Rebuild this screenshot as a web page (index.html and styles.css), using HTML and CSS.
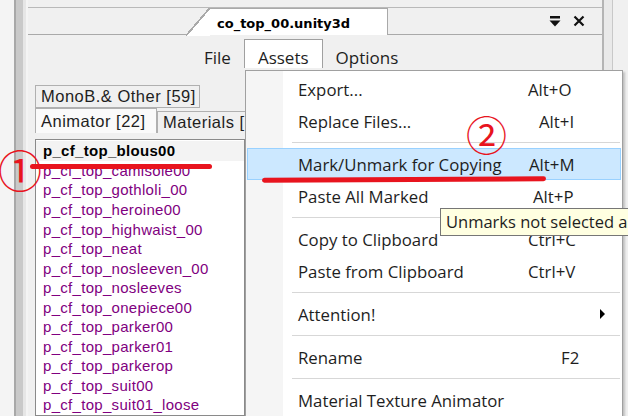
FILE: index.html
```html
<!DOCTYPE html>
<html lang="en">
<head>
  <meta charset="UTF-8">
  <title>co_top_00.unity3d</title>
  <link rel="stylesheet" href="styles.css">
</head>
<body>
  <div class="app">
    <div class="rail"><div class="rail-bar"></div></div>
    <div class="main">
      <div class="topstrip"></div>
      <div class="doc-tabs">
        <div class="doc-tab">co_top_00.unity3d</div>
        <div class="doc-ctrl">
          <svg width="12" height="11" viewBox="0 0 12 11"><rect x="1" y="0" width="10" height="2.5" fill="#111"/><path d="M0.5 4.5h11l-5.5 6z" fill="#111"/></svg>
          <svg width="12" height="12" viewBox="0 0 12 12"><path d="M1.5 1.5l9 9M10.5 1.5l-9 9" stroke="#111" stroke-width="2.2"/></svg>
        </div>
      </div>
      <div class="menubar">
        <span class="mb-item">File</span>
        <span class="mb-item open">Assets</span>
        <span class="mb-item">Options</span>
      </div>
      <div class="pane">
        <div class="tabrow back"><span class="tab">MonoB.&amp; Other [59]</span></div>
        <div class="tabrow front">
          <span class="tab sel">Animator [22]</span>
          <span class="tab">Materials [</span>
        </div>
        <ul class="asset-list">
          <li class="current">p_cf_top_blous00</li>
          <li>p_cf_top_camisole00</li>
          <li>p_cf_top_gothloli_00</li>
          <li>p_cf_top_heroine00</li>
          <li>p_cf_top_highwaist_00</li>
          <li>p_cf_top_neat</li>
          <li>p_cf_top_nosleeven_00</li>
          <li>p_cf_top_nosleeves</li>
          <li>p_cf_top_onepiece00</li>
          <li>p_cf_top_parker00</li>
          <li>p_cf_top_parker01</li>
          <li>p_cf_top_parkerop</li>
          <li>p_cf_top_suit00</li>
          <li>p_cf_top_suit01_loose</li>
        </ul>
      </div>
    </div>
    <div class="right-rail"></div>
  </div>

  <div class="ctx">
    <div class="ctx-item"><span>Export...</span><span class="key">Alt+O</span></div>
    <div class="ctx-item"><span>Replace Files...</span><span class="key k2">Alt+I</span></div>
    <div class="ctx-sep"></div>
    <div class="ctx-item hot"><span>Mark/Unmark for Copying</span><span class="key">Alt+M</span></div>
    <div class="ctx-item"><span>Paste All Marked</span><span class="key k1">Alt+P</span></div>
    <div class="ctx-sep"></div>
    <div class="ctx-item"><span>Copy to Clipboard</span><span class="key">Ctrl+C</span></div>
    <div class="ctx-item"><span>Paste from Clipboard</span><span class="key">Ctrl+V</span></div>
    <div class="ctx-sep"></div>
    <div class="ctx-item"><span>Attention!</span><span class="arrow"></span></div>
    <div class="ctx-sep"></div>
    <div class="ctx-item"><span>Rename</span><span class="key k3">F2</span></div>
    <div class="ctx-sep"></div>
    <div class="ctx-item"><span>Material Texture Animator</span></div>
  </div>

  <div class="tip">Unmarks not selected a</div>

  <span class="mark m1">①</span>
  <span class="mark m2">②</span>
  <div class="stroke s1"></div>
  <div class="stroke s2"></div>
</body>
</html>
```

FILE: styles.css
```css
html, body {
  margin: 0;
  height: 100%;
  overflow: hidden;
}
body {
  background-color: #f0f0f0;
  font-family: "Open Sans", "Noto Sans", sans-serif;
  color: #1e1e1e;
  position: relative;
}
.app {
  display: flex;
  height: 416px;
}
.rail {
  width: 28px;
  display: flex;
  justify-content: flex-end;
  background-color: #f4f4f4;
}
.rail-bar {
  width: 12px;
  margin-right: 2px;
  background: linear-gradient(to right, #a8a8a8 0, #a8a8a8 2px, #c9c9c9 2px, #c9c9c9 9px, #e6e6e6 9px);
}
.main {
  width: 574px;
  display: flex;
  flex-direction: column;
}
.right-rail {
  width: 8px;
  border-left: 2px solid #b4b4b4;
  border-right: 1px solid #c8c8c8;
  background-color: #e9e9e9;
}
.topstrip {
  height: 7px;
  border-bottom: 1px solid #b9b9b9;
}

/* document tab */
.doc-tabs {
  height: 26px;
  display: flex;
  align-items: stretch;
  border-bottom: 1px solid #a9a9a9;
}
.doc-tab {
  margin-left: 180px;
  width: 170px;
  padding-left: 9px;
  padding-top: 4px;
  background-color: #fff;
  border: 1px solid #a9a9a9;
  border-bottom: none;
  border-left: none;
  margin-bottom: -1px;
  position: relative;
  font-family: "DejaVu Sans", sans-serif;
  font-weight: bold;
  font-size: 13px;
  line-height: 22px;
  color: #000;
}
.doc-tab::before {
  content: "";
  position: absolute;
  left: -22px;
  top: -1px;
  width: 24px;
  height: 28px;
  background: linear-gradient(to bottom right, transparent 47%, #a9a9a9 47%, #a9a9a9 52%, #fff 52%);
}
.doc-ctrl {
  margin-left: auto;
  margin-right: 17px;
  display: flex;
  align-items: center;
  gap: 12px;
  padding-top: 1px;
}

/* menu bar */
.menubar {
  height: 35px;
  display: flex;
  align-items: flex-end;
  padding-left: 163px;
  font-size: 17px;
}
.mb-item {
  padding: 0 13px;
  line-height: 18px;
}
.mb-item.open {
  box-sizing: border-box;
  height: 29px;
  background-color: #fff;
  border: 1px solid #a0a0a0;
  border-bottom: none;
  padding-top: 9px;
  margin-bottom: -1px;
  position: relative;
  z-index: 3;
}

/* left pane */
.pane {
  padding-left: 7px;
  padding-top: 18px;
  flex: 1;
  display: flex;
  flex-direction: column;
  font-family: "Liberation Sans", sans-serif;
  font-size: 15px;
}
.tabrow {
  display: flex;
}
.tab {
  border: 1px solid #b0b0b0;
  border-bottom: none;
  padding: 0 8px 0 5px;
  line-height: 21px;
  font-size: 16.5px;
  letter-spacing: 0.5px;
  background-color: #f0f0f0;
  white-space: nowrap;
}
.tabrow.back .tab {
  width: 150px;
  border-bottom: 1px solid #b0b0b0;
}
.tabrow.front .tab {
  margin-top: 3px;
}
.tabrow.front .tab.sel {
  margin-top: 0;
  width: 107px;
  line-height: 24px;
  background-color: #fafafa;
}
.asset-list {
  list-style: none;
  margin: 6px 0 0 0;
  padding: 1px 0 0 0;
  width: 208px;
  flex: 1;
  background-color: #fff;
  border: 1px solid #8a8a8a;
  color: #800080;
}
.asset-list li {
  line-height: 19.55px;
  padding-left: 7px;
  letter-spacing: 0.3px;
  white-space: nowrap;
}
.asset-list li.current {
  color: #000;
  font-weight: bold;
  background-color: #f3f3f3;
}

/* context menu */
.ctx {
  position: absolute;
  left: 245px;
  top: 70px;
  width: 378px;
  height: 352px;
  padding-top: 2px;
  box-sizing: border-box;
  background: linear-gradient(to right, #f5f5f5 0, #f5f5f5 37px, #fff 37px);
  border: 1px solid #a0a0a0;
  box-shadow: 2px 2px 2px rgba(0, 0, 0, 0.2);
  font-size: 16.8px;
  z-index: 2;
}
.ctx-item {
  height: 32px;
  display: flex;
  align-items: center;
  padding-left: 51px;
  margin: 0 1px;
  box-sizing: border-box;
  position: relative;
  white-space: nowrap;
}
.ctx-item.hot {
  background-color: #cce8ff;
  border: 1px solid #99d1ff;
  padding-left: 50px;
}
.key {
  position: absolute;
  left: 281px;
}
.key.k1 { left: 286px; }
.key.k2 { left: 292px; }
.key.k3 { left: 314px; }
.arrow {
  position: absolute;
  right: 16px;
  top: 11px;
  border-left: 5px solid #000;
  border-top: 5px solid transparent;
  border-bottom: 5px solid transparent;
}
.ctx-sep {
  height: 11px;
  margin-left: 46px;
  margin-right: 2px;
  display: flex;
  align-items: center;
}
.ctx-sep::before {
  content: "";
  flex: 1;
  border-top: 1px solid #d7d7d7;
  border-bottom: 1px solid #fff;
}

/* tooltip */
.tip {
  position: absolute;
  left: 440px;
  top: 208px;
  width: 190px;
  height: 28px;
  padding: 0 5px;
  box-sizing: border-box;
  white-space: nowrap;
  overflow: hidden;
  background-color: #ffffe1;
  border: 1px solid #767676;
  font-size: 16.5px;
  line-height: 26px;
  z-index: 4;
}

/* red annotations */
.mark {
  position: absolute;
  color: #e8141e;
  font-family: "Noto Sans CJK JP", sans-serif;
  line-height: 1;
  z-index: 6;
}
.m1 {
  left: -2px;
  top: 147px;
  font-size: 44px;
}
.m2 {
  left: 466px;
  top: 113px;
  font-size: 41px;
}
.stroke {
  position: absolute;
  height: 5px;
  border-radius: 3px;
  background-color: #e8141e;
  z-index: 6;
}
.s1 {
  left: 30px;
  top: 164px;
  width: 182px;
}
.s2 {
  left: 262px;
  top: 177px;
  width: 284px;
  transform: rotate(-0.3deg);
}
```
